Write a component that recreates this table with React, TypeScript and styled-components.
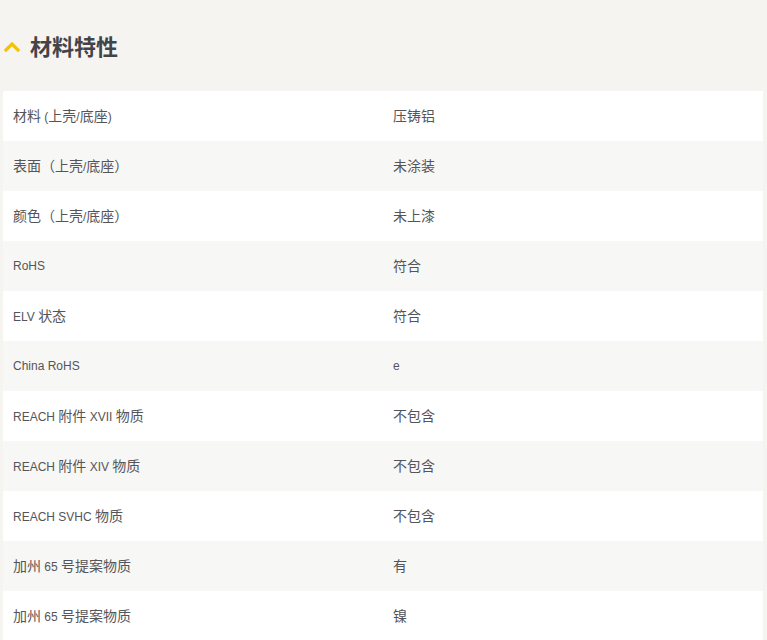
import React from "react";
import styled, { createGlobalStyle } from "styled-components";

const Global = createGlobalStyle`
  html, body { margin: 0; padding: 0; background: #f5f4f1; }
  body { font-family: "Noto Sans CJK SC", "Noto Sans", sans-serif; }
`;

const Page = styled.div`
  padding: 0 4px 0 3px;
`;

const Header = styled.div`
  display: flex;
  align-items: center;
  gap: 10px;
  height: 91px;
  padding-left: 1px;
`;

const Chevron = styled.svg`
  width: 16px;
  height: 12px;
  flex: none;
`;

const Title = styled.h2`
  margin: 0;
  font-size: 22px;
  font-weight: 700;
  color: #444448;
  line-height: 1;
  padding-bottom: 2px;
`;

const Table = styled.div`
  display: flex;
  flex-direction: column;
`;

const Row = styled.div<{ $alt: boolean }>`
  display: grid;
  grid-template-columns: 380px 1fr;
  height: 50px;
  align-items: center;
  background: ${(p) => (p.$alt ? "#f7f7f5" : "#ffffff")};
`;

const Cell = styled.div`
  padding-left: 10px;
  font-family: "Liberation Sans", "Noto Sans CJK SC", sans-serif;
  font-size: 12px;
  line-height: 20px;
  color: #555559;
  white-space: nowrap;
`;

const Han = styled.span`
  font-family: "Noto Sans CJK SC", sans-serif;
  font-size: 14px;
`;

const HAN_RE = /([\u3000-\u9fff\uff00-\uffef]+)/;

function Mixed({ text }: { text: string }) {
  const parts = text.split(HAN_RE).filter((p) => p.length > 0);
  return (
    <>
      {parts.map((p, i) =>
        HAN_RE.test(p) ? <Han key={i}>{p}</Han> : <React.Fragment key={i}>{p}</React.Fragment>
      )}
    </>
  );
}

const rows: [string, string][] = [
  ["材料 (上壳/底座)", "压铸铝"],
  ["表面（上壳/底座）", "未涂装"],
  ["颜色（上壳/底座）", "未上漆"],
  ["RoHS", "符合"],
  ["ELV 状态", "符合"],
  ["China RoHS", "e"],
  ["REACH 附件 XVII 物质", "不包含"],
  ["REACH 附件 XIV 物质", "不包含"],
  ["REACH SVHC 物质", "不包含"],
  ["加州 65 号提案物质", "有"],
  ["加州 65 号提案物质", "镍"],
];

export default function App() {
  return (
    <Page>
      <Global />
      <Header>
        <Chevron viewBox="0 0 16 12">
          <path d="M2 10 L8 4 L14 10" fill="none" stroke="#f6c100" strokeWidth="3.2" strokeLinecap="square" />
        </Chevron>
        <Title>材料特性</Title>
      </Header>
      <Table>
        {rows.map(([k, v], i) => (
          <Row key={i} $alt={i % 2 === 1}>
            <Cell>
              <Mixed text={k} />
            </Cell>
            <Cell>
              <Mixed text={v} />
            </Cell>
          </Row>
        ))}
      </Table>
    </Page>
  );
}
